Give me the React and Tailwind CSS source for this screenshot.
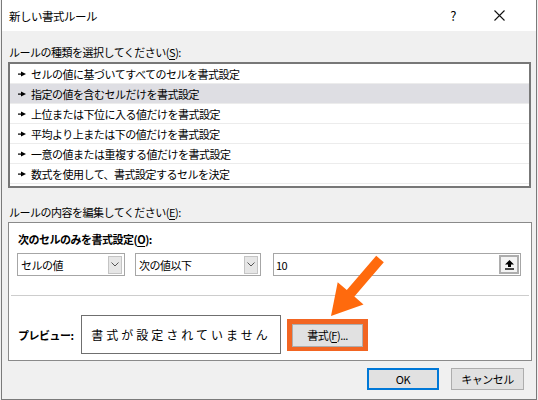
import React from "react";

const rules = [
    "セルの値に基づいてすべてのセルを書式設定",
    "指定の値を含むセルだけを書式設定",
    "上位または下位に入る値だけを書式設定",
    "平均より上または下の値だけを書式設定",
    "一意の値または重複する値だけを書式設定",
    "数式を使用して、書式設定するセルを決定",
];

const RowPointer = () => (
    <svg width="8" height="6" viewBox="0 0 8 6" className="shrink-0">
        <rect x="0" y="2.5" width="4" height="1.2" fill="#000" />
        <path d="M3 0.5 L8 3 L3 5.5 Z" fill="#000" />
    </svg>
);

const Chevron = () => (
    <div className="w-[14px] h-[18px] mr-[2px] flex items-center justify-center bg-[#e6e6e6] border border-[#c4c4c4]">
        <svg width="8" height="5" viewBox="0 0 8 5">
            <path d="M0.5 0.5 L4 4 L7.5 0.5" fill="none" stroke="#555" strokeWidth="1" />
        </svg>
    </div>
);

const Select = ({ value, width }) => (
    <div className={`${width} h-[23px] flex items-center justify-between bg-white border border-[#a6a6a6]`}>
        <span className="pl-[3px] leading-[16px]">{value}</span>
        <Chevron />
    </div>
);

export default function App() {
    return (
        <div className="relative w-[538px] h-[400px] bg-[#f0f0f0] font-['Noto_Sans_CJK_JP',sans-serif] text-[11px] tracking-[-0.5px] text-black">
            <div className="ml-[1px] w-[536px] h-[400px] border-x border-b border-[#7a7a7a] bg-[#f0f0f0] flex flex-col">

                {/* Title bar */}
                <div className="h-[31px] bg-white flex items-center pl-[7px]">
                    <span className="text-[11.5px] leading-[16px]">新しい書式ルール</span>
                    <div className="ml-auto flex items-center">
                        <div className="w-[46px] flex justify-center text-[13px] leading-[16px]">?</div>
                        <div className="w-[46px] mr-[14px] flex justify-center">
                            <svg width="11" height="11" viewBox="0 0 11 11">
                                <path d="M0.5 0.5 L10.5 10.5 M10.5 0.5 L0.5 10.5" stroke="#111" strokeWidth="1.1" />
                            </svg>
                        </div>
                    </div>
                </div>

                {/* Body */}
                <div className="flex flex-col px-[6px] pt-[13px]">
                    <div className="leading-[16px] pl-[1px]">
                        ルールの種類を選択してください(<span className="underline underline-offset-2">S</span>):
                    </div>

                    {/* Rule type list */}
                    <div className="mt-[2px] w-[523px] bg-white border-2 border-[#777777] pb-[2px]">
                        {rules.map((rule, i) => (
                            <div
                                key={rule}
                                className={`h-[20px] flex items-center gap-[5px] pl-[8px] border-b border-[#ececec] ${i === 1 ? "bg-[#dedee3]" : ""}`}
                            >
                                <RowPointer />
                                <span className="leading-[16px]">{rule}</span>
                            </div>
                        ))}
                    </div>

                    <div className="mt-[16px] leading-[16px] pl-[1px]">
                        ルールの内容を編集してください(<span className="underline underline-offset-2">E</span>):
                    </div>

                    {/* Rule description group */}
                    <div className="mt-[2px] w-[524px] bg-white border border-[#8a8a8a] pt-[8px] pb-[6px] flex flex-col">
                        <div className="pl-[9px] font-bold leading-[16px]">
                            次のセルのみを書式設定(<span className="underline underline-offset-2">O</span>):
                        </div>

                        <div className="mt-[6px] pl-[8px] flex items-center">
                            <Select value="セルの値" width="w-[108px]" />
                            <div className="ml-[10px]">
                                <Select value="次の値以下" width="w-[126px]" />
                            </div>
                            <div className="ml-[12px] w-[248px] h-[23px] flex items-center justify-between bg-white border border-[#a6a6a6]">
                                <span className="pl-[2px] leading-[16px]">10</span>
                                <div className="w-[20px] h-[19px] mr-[1px] flex items-center justify-center bg-[#f4f4f4] border-2 border-[#adadad]">
                                    <svg width="9" height="10" viewBox="0 0 9 10">
                                        <path d="M4.5 0 L9 4.5 H6 V7 H3 V4.5 H0 Z" fill="#000" />
                                        <rect x="0" y="8.3" width="9" height="1.4" fill="#000" />
                                    </svg>
                                </div>
                            </div>
                        </div>

                        <div className="mt-[19px] mx-[2px] h-px bg-[#cdcdcd]" />

                        {/* Preview */}
                        <div className="mt-[19px] pl-[9px] flex items-center">
                            <div className="w-[63px] font-bold leading-[16px]">プレビュー:</div>
                            <div className="w-[200px] h-[39px] flex items-center justify-center border border-[#6f6f6f] text-[12px] tracking-[3px]">
                                書式が設定されていません
                            </div>
                            <div className="ml-[6px] border-[5px] border-b-[4px] border-[#f26522]">
                                <div className="w-[71px] h-[23px] flex items-center justify-center bg-[#e1e1e1] border border-[#adadad] leading-[16px]">
                                    書式(<span className="underline underline-offset-2">F</span>)...
                                </div>
                            </div>
                        </div>
                    </div>

                    {/* Dialog buttons */}
                    <div className="mt-[7px] flex justify-end gap-[12px] pr-[6px]">
                        <div className="w-[72px] h-[22px] flex items-center justify-center bg-[#e1e1e1] border-2 border-[#0078d7] leading-[16px]">
                            OK
                        </div>
                        <div className="w-[73px] h-[22px] flex items-center justify-center bg-[#e1e1e1] border border-[#adadad] leading-[16px]">
                            キャンセル
                        </div>
                    </div>
                </div>
            </div>

            {/* Callout arrow */}
            <svg className="absolute inset-0 pointer-events-none" width="538" height="400" viewBox="0 0 538 400">
                <polygon
                    points="376.2,255.7 383.8,262.3 354.4,296.6 363.5,304.4 331,316 337.7,282.2 346.8,290"
                    fill="#ff6a0d"
                />
            </svg>
        </div>
    );
}
